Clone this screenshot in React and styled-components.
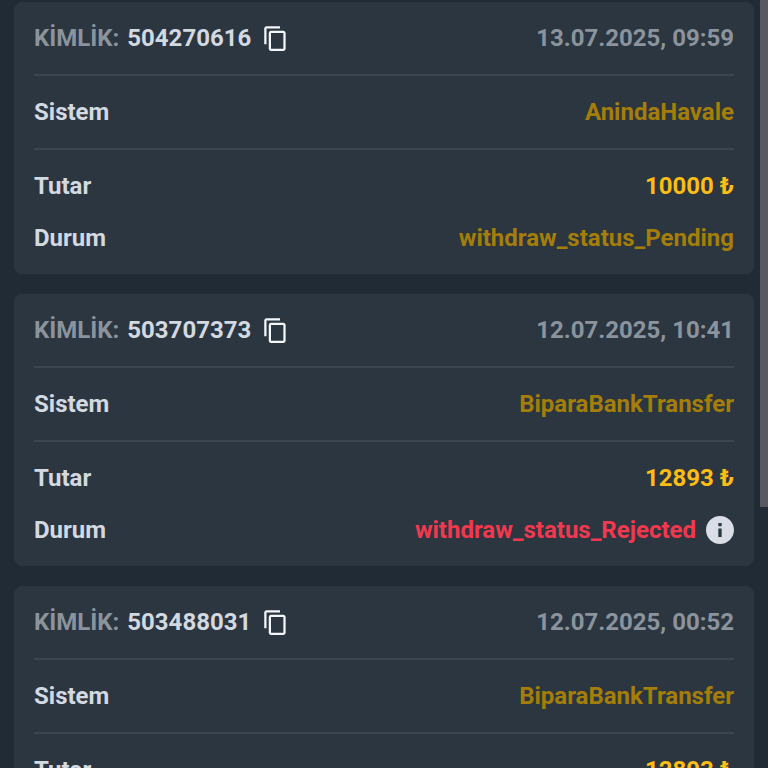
import React from 'react';
import styled, { createGlobalStyle } from 'styled-components';
import { MdContentCopy } from 'react-icons/md';

const withdrawals = [
  {
    id: '504270616',
    date: '13.07.2025, 09:59',
    system: 'AnindaHavale',
    amount: '10000 ₺',
    status: 'Pending',
  },
  {
    id: '503707373',
    date: '12.07.2025, 10:41',
    system: 'BiparaBankTransfer',
    amount: '12893 ₺',
    status: 'Rejected',
  },
  {
    id: '503488031',
    date: '12.07.2025, 00:52',
    system: 'BiparaBankTransfer',
    amount: '12893 ₺',
    status: 'Rejected',
  },
];

const colors = {
  text: '#d3d9e0',
  muted: '#8b949d',
  system: '#a47e08',
  amount: '#fcbd14',
  Pending: '#a47e08',
  Rejected: '#f2384e',
};

const InfoIcon = () => (
  <svg width="28" height="28" viewBox="2 2 20 20" fill="currentColor" aria-hidden="true">
    <path d="M12 2C6.48 2 2 6.48 2 12s4.48 10 10 10 10-4.48 10-10S17.52 2 12 2zm1.2 15h-2.4v-6h2.4v6zm0-7.7h-2.4V7h2.4v2.3z" />
  </svg>
);

const Withdrawal = ({ item }) => (
  <Card>
    <Section>
      <Row>
        <Identity>
          <Text color={colors.muted}>KİMLİK:</Text>
          <Text>{item.id}</Text>
          <CopyButton type="button" aria-label="Kopyala">
            <MdContentCopy size={27} />
          </CopyButton>
        </Identity>
        <Text as="time" color={colors.muted}>{item.date}</Text>
      </Row>
    </Section>
    <Section>
      <Row>
        <Text>Sistem</Text>
        <Text color={colors.system}>{item.system}</Text>
      </Row>
    </Section>
    <Section>
      <Row>
        <Text>Tutar</Text>
        <Text color={colors.amount}>{item.amount}</Text>
      </Row>
      <Row>
        <Text>Durum</Text>
        <Status>
          <Text color={colors[item.status]}>withdraw_status_{item.status}</Text>
          {item.status === 'Rejected' && (
            <InfoButton type="button" aria-label="Bilgi">
              <InfoIcon />
            </InfoButton>
          )}
        </Status>
      </Row>
    </Section>
  </Card>
);

export default function App() {
  return (
    <Page>
      <GlobalStyle />
      <List>
        {withdrawals.map(item => <Withdrawal key={item.id} item={item} />)}
      </List>
      <ScrollTrack>
        <ScrollThumb />
      </ScrollTrack>
    </Page>
  );
}

const GlobalStyle = createGlobalStyle`
  * {
    box-sizing: border-box;
  }
  body {
    margin: 0;
    background: #202b36;
    font-family: Roboto, sans-serif;
  }
`;

const Page = styled.div`
  display: flex;
  height: 100vh;
  overflow: hidden;
`;

const List = styled.main`
  flex: 1;
  display: flex;
  flex-direction: column;
  gap: 20px;
  padding: 2px 6px 0 14px;
`;

const ScrollTrack = styled.div`
  width: 8px;
`;

const ScrollThumb = styled.div`
  height: 66%;
  background: #575a61;
`;

const Card = styled.article`
  flex: none;
  padding: 0 20px;
  border-radius: 8px;
  background: #2b3641;
`;

const Section = styled.div`
  display: flex;
  flex-direction: column;
  gap: 24px;
  padding: 22px 0;
  & + & {
    border-top: 2px solid #3b4651;
  }
`;

const Row = styled.div`
  display: flex;
  align-items: center;
  justify-content: space-between;
  height: 28px;
`;

const Identity = styled.div`
  display: flex;
  align-items: center;
  gap: 8px;
`;

const Status = styled.div`
  display: flex;
  align-items: center;
  gap: 10px;
`;

const Text = styled.span`
  color: ${props => props.color || colors.text};
  font-size: 24px;
  font-weight: 700;
  line-height: 28px;
  white-space: nowrap;
`;

const IconButton = styled.button`
  display: flex;
  padding: 0;
  border: 0;
  background: none;
  cursor: pointer;
`;

const CopyButton = styled(IconButton)`
  margin-left: 3px;
  color: #f4f8fb;
`;

const InfoButton = styled(IconButton)`
  color: #d9dde5;
`;
